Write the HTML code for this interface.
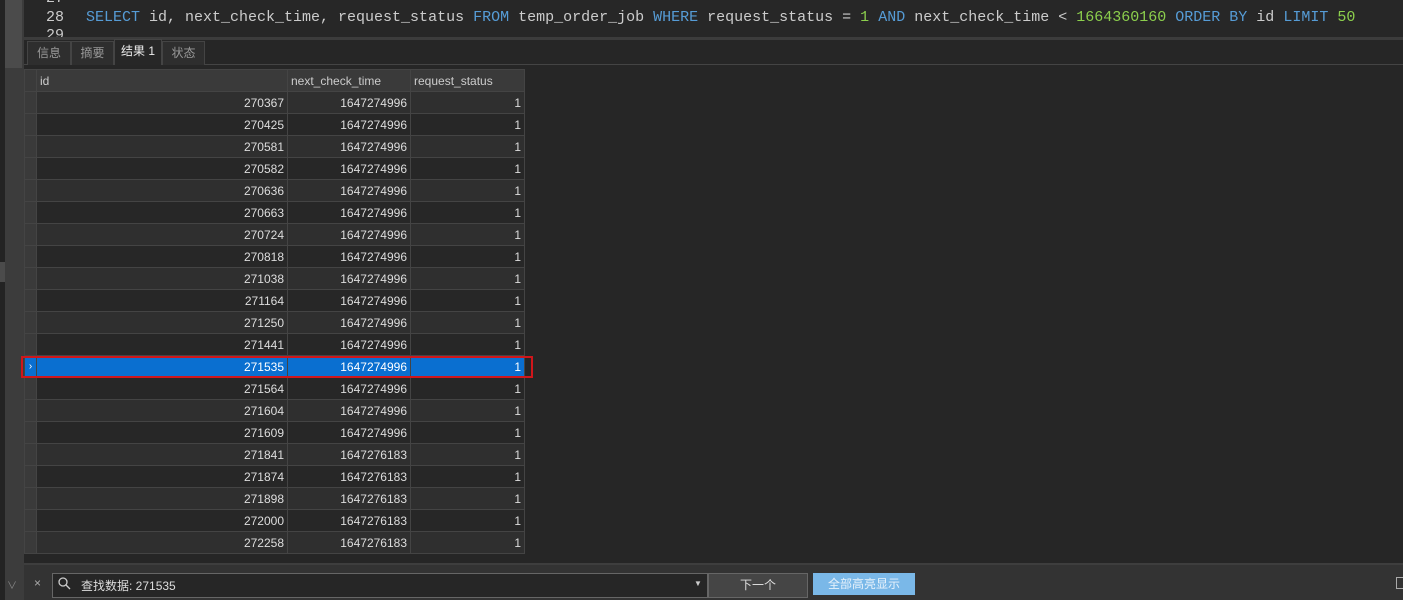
<!DOCTYPE html>
<html><head><meta charset="utf-8"><style>
*{margin:0;padding:0;box-sizing:border-box}
body{width:1403px;height:600px;background:#262626;position:relative;overflow:hidden;font-family:"Liberation Sans","Noto Sans CJK SC",sans-serif;color:#ddd}
.abs{position:absolute}
.code{font-family:"Liberation Mono",monospace;font-size:15px;white-space:pre}
.kw{color:#569cd6}.num{color:#8ccf4d}
.tab{position:absolute;top:41px;height:24px;border:1px solid #444;border-bottom:none;background:#2e2e2e;color:#999;font-size:12px;line-height:22px;text-align:center}
table{border-collapse:collapse;position:absolute;left:24px;top:69px;font-size:12px}
td{height:22px;border:1px solid #444;padding:0 3px;text-align:right;color:#ddd}
tr:nth-child(even) td{background:#2f2f2f}
tr:nth-child(odd) td{background:#272727}
td.ind{width:12px;background:#3a3a3a!important;padding:0}
tr.h td{background:#3a3a3a!important;text-align:left;color:#ccc}
tr.sel td{background:#0a6fd0!important;color:#fff}
</style></head><body>
<div class="abs" style="left:0;top:0;width:5px;height:600px;background:#232323"></div>
<div class="abs" style="left:5px;top:0;width:19px;height:600px;background:#3c3c3c"></div>
<div class="abs" style="left:5px;top:0;width:17px;height:68px;background:#4b4b4b"></div>
<div class="abs" style="left:0;top:262px;width:5px;height:20px;background:#4b4b4b"></div>
<div class="abs" style="left:24px;top:0;width:1379px;height:37px;background:#272727"></div>
<div class="abs code" style="left:46px;top:-10px;color:#ccc">27</div>
<div class="abs code" style="left:46px;top:9px;color:#ccc">28</div>
<div class="abs code" style="left:86px;top:9px;color:#ccc"><span class="kw">SELECT</span> id, next_check_time, request_status <span class="kw">FROM</span> temp_order_job <span class="kw">WHERE</span> request_status = <span class="num">1</span> <span class="kw">AND</span> next_check_time &lt; <span class="num">1664360160</span> <span class="kw">ORDER BY</span> id <span class="kw">LIMIT</span> <span class="num">50</span></div>
<div class="abs code" style="left:46px;top:27px;color:#ccc;height:10px;overflow:hidden">29</div>
<div class="abs" style="left:24px;top:37px;width:1379px;height:3px;background:#3c3c3c"></div>
<div class="abs" style="left:24px;top:64px;width:1379px;height:1px;background:#444"></div>
<div class="tab" style="left:27px;width:44px">信息</div>
<div class="tab" style="left:71px;width:43px">摘要</div>
<div class="tab" style="left:114px;width:48px;top:39px;height:26px;background:#272727;color:#eee">结果 1</div>
<div class="tab" style="left:162px;width:43px">状态</div>
<table>
<tr class="h"><td class="ind"></td><td style="width:251px">id</td><td style="width:123px">next_check_time</td><td style="width:114px">request_status</td></tr>
<tr><td class="ind"></td><td>270367</td><td>1647274996</td><td>1</td></tr>
<tr><td class="ind"></td><td>270425</td><td>1647274996</td><td>1</td></tr>
<tr><td class="ind"></td><td>270581</td><td>1647274996</td><td>1</td></tr>
<tr><td class="ind"></td><td>270582</td><td>1647274996</td><td>1</td></tr>
<tr><td class="ind"></td><td>270636</td><td>1647274996</td><td>1</td></tr>
<tr><td class="ind"></td><td>270663</td><td>1647274996</td><td>1</td></tr>
<tr><td class="ind"></td><td>270724</td><td>1647274996</td><td>1</td></tr>
<tr><td class="ind"></td><td>270818</td><td>1647274996</td><td>1</td></tr>
<tr><td class="ind"></td><td>271038</td><td>1647274996</td><td>1</td></tr>
<tr><td class="ind"></td><td>271164</td><td>1647274996</td><td>1</td></tr>
<tr><td class="ind"></td><td>271250</td><td>1647274996</td><td>1</td></tr>
<tr><td class="ind"></td><td>271441</td><td>1647274996</td><td>1</td></tr>
<tr class="sel"><td class="ind" style="color:#fff;text-align:center;font-size:10px">›</td><td>271535</td><td>1647274996</td><td>1</td></tr>
<tr><td class="ind"></td><td>271564</td><td>1647274996</td><td>1</td></tr>
<tr><td class="ind"></td><td>271604</td><td>1647274996</td><td>1</td></tr>
<tr><td class="ind"></td><td>271609</td><td>1647274996</td><td>1</td></tr>
<tr><td class="ind"></td><td>271841</td><td>1647276183</td><td>1</td></tr>
<tr><td class="ind"></td><td>271874</td><td>1647276183</td><td>1</td></tr>
<tr><td class="ind"></td><td>271898</td><td>1647276183</td><td>1</td></tr>
<tr><td class="ind"></td><td>272000</td><td>1647276183</td><td>1</td></tr>
<tr><td class="ind"></td><td>272258</td><td>1647276183</td><td>1</td></tr>
</table>
<div class="abs" style="left:21px;top:356px;width:512px;height:22px;border:2px solid #d0161b"></div>
<div class="abs" style="left:24px;top:563px;width:1379px;height:37px;background:#333;border-top:2px solid #3e3e3e"></div>
<div class="abs" style="left:34px;top:576px;font-size:12px;color:#aaa">×</div>
<div class="abs" style="left:52px;top:573px;width:656px;height:25px;background:#262626;border:1px solid #666"></div>
<svg class="abs" style="left:57px;top:576px" width="14" height="14"><circle cx="6" cy="6" r="4" stroke="#ccc" stroke-width="1.3" fill="none"/><path d="M9 9 L13 13" stroke="#ccc" stroke-width="1.3"/></svg>
<div class="abs" style="left:81px;top:577px;font-size:12px;color:#ddd">查找数据: 271535</div>
<div class="abs" style="left:694px;top:579px;font-size:8px;color:#ccc">▼</div>
<div class="abs" style="left:708px;top:573px;width:100px;height:25px;background:#454545;border:1px solid #666;font-size:12px;line-height:23px;text-align:center;color:#ddd">下一个</div>
<div class="abs" style="left:813px;top:573px;width:102px;height:22px;background:#7ab8e8;font-size:12px;line-height:22px;text-align:center;color:#e8f2fb">全部高亮显示</div>
<div class="abs" style="left:1396px;top:577px;width:9px;height:12px;border:1px solid #aaa"></div>
<div class="abs" style="left:7px;top:577px;font-size:10px;color:#888">∨</div>
</body></html>
